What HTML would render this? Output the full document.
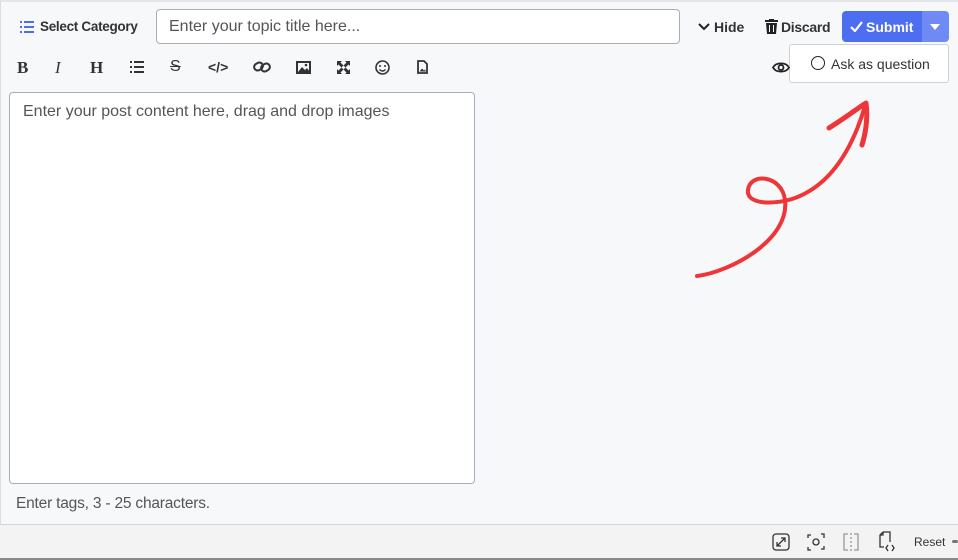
<!DOCTYPE html>
<html><head><meta charset="utf-8"><style>
*{box-sizing:border-box;margin:0;padding:0}
body{width:958px;height:560px;overflow:hidden;background:#f3f3f3;font-family:"Liberation Sans",sans-serif;position:relative}
.panel{position:absolute;left:0;top:0;width:958px;height:525px;background:#f7f8fa;border-left:1px solid #dcdde0;border-bottom:1px solid #d4d5d8;border-top:2px solid #e4e5e8}
.a{position:absolute}
.btxt{font-size:14px;font-weight:bold;color:#333}
</style></head><body>
<div class="panel"></div>
<svg class="a" style="left:20px;top:20px" width="14" height="14" viewBox="0 0 14 14" fill="#4a6cf7"><rect x="0" y="1" width="2" height="2"/><rect x="4" y="1" width="10" height="2"/><rect x="0" y="6" width="2" height="2"/><rect x="4" y="6" width="10" height="2"/><rect x="0" y="11" width="2" height="2"/><rect x="4" y="11" width="10" height="2"/></svg>
<div class="a btxt" style="left:40px;top:19px;color:#333;font-size:13.5px;letter-spacing:-0.3px">Select Category</div>
<div class="a" style="left:156px;top:9px;width:524px;height:35px;background:#fff;border:1px solid #a9adb4;border-radius:4px;font-size:16px;color:#555;padding:8px 12px">Enter your topic title here...</div>
<svg class="a" style="left:698px;top:22px" width="12" height="10" viewBox="0 0 12 10"><path d="M1 2l5 5 5-5" fill="none" stroke="#222" stroke-width="2"/></svg>
<div class="a btxt" style="left:714px;top:19px">Hide</div>
<svg class="a" style="left:765px;top:19px" width="13" height="15" viewBox="0 0 13 15" fill="#222"><rect x="0" y="1" width="13" height="2"/><rect x="4" y="0" width="5" height="2"/><path d="M1 4h11l-1 11H2z"/><rect x="4" y="6" width="1" height="7" fill="#fff"/><rect x="8" y="6" width="1" height="7" fill="#fff"/></svg>
<div class="a btxt" style="left:781px;top:19px;letter-spacing:-0.3px">Discard</div>
<div class="a" style="left:842px;top:11px;width:80px;height:31px;background:#4e6ef2;border-radius:4px 0 0 4px"></div>
<div class="a" style="left:922px;top:11px;width:27px;height:31px;background:#6f89f5;border-radius:0 4px 4px 0"></div>
<svg class="a" style="left:850px;top:21px" width="13" height="11" viewBox="0 0 13 11"><path d="M1 6l4 4 7-9" fill="none" stroke="#fff" stroke-width="2.2"/></svg>
<div class="a btxt" style="left:866px;top:19px;color:#fff">Submit</div>
<svg class="a" style="left:930px;top:24px" width="10" height="6" viewBox="0 0 10 6"><path d="M0 0h10L5 6z" fill="#fff"/></svg>
<div class="a" style="left:789px;top:44px;width:160px;height:39px;background:#fff;border:1px solid #cfd1d5;border-radius:3px"></div>
<div class="a" style="left:811px;top:56px;width:14px;height:14px;border:1.5px solid #222;border-radius:50%"></div>
<div class="a" style="left:831px;top:56px;font-size:14px;color:#333">Ask as question</div>
<svg class="a" style="left:772px;top:61px" width="18" height="13" viewBox="0 0 18 13"><path d="M1 6.5C4 1 14 1 17 6.5 14 12 4 12 1 6.5z" fill="none" stroke="#222" stroke-width="1.8"/><circle cx="9" cy="6.5" r="2.5" fill="none" stroke="#222" stroke-width="1.8"/></svg>
<div class="a" style="left:17px;top:58px;font:bold 17px 'Liberation Serif',serif;color:#333">B</div>
<div class="a" style="left:55px;top:58px;font:italic 17px 'Liberation Serif',serif;color:#333">I</div>
<div class="a" style="left:90px;top:58px;font:bold 17px 'Liberation Serif',serif;color:#333">H</div>
<svg class="a" style="left:130px;top:61px" width="14" height="13" viewBox="0 0 14 13" fill="#333"><rect x="0" y="0" width="2" height="2"/><rect x="4" y="0" width="10" height="2"/><rect x="0" y="5" width="2" height="2"/><rect x="4" y="5" width="10" height="2"/><rect x="0" y="10" width="2" height="2"/><rect x="4" y="10" width="10" height="2"/></svg>
<div class="a" style="left:170px;top:58px;font-size:16px;color:#333;text-decoration:line-through">S</div>
<div class="a" style="left:208px;top:59px;font-size:14px;font-weight:bold;color:#333">&lt;/&gt;</div>
<svg class="a" style="left:253px;top:60px" width="18" height="14" viewBox="0 0 18 14"><rect x="1" y="3" width="9" height="7" rx="3.5" transform="rotate(-30 5.5 6.5)" fill="none" stroke="#333" stroke-width="2"/><rect x="8" y="4" width="9" height="7" rx="3.5" transform="rotate(-30 12.5 7.5)" fill="none" stroke="#333" stroke-width="2"/></svg>
<svg class="a" style="left:296px;top:61px" width="15" height="13" viewBox="0 0 15 13"><rect x="1" y="1" width="13" height="11" fill="none" stroke="#333" stroke-width="2"/><path d="M2 11l4-5 3 3 2-2 3 4z" fill="#333"/><circle cx="10" cy="4" r="1.3" fill="#333"/></svg>
<svg class="a" style="left:337px;top:61px" width="13" height="13" viewBox="0 0 13 13" fill="#333"><path d="M0 0h5L3.5 1.5 6.5 4.5 4.5 6.5 1.5 3.5 0 5zM13 0v5l-1.5-1.5-3 3-2-2 3-3L8 0zM0 13V8l1.5 1.5 3-3 2 2-3 3L5 13zM13 13H8l1.5-1.5-3-3 2-2 3 3L13 8z"/></svg>
<svg class="a" style="left:375px;top:60px" width="15" height="15" viewBox="0 0 15 15"><circle cx="7.5" cy="7.5" r="6.5" fill="none" stroke="#333" stroke-width="1.6"/><circle cx="5" cy="6" r="1" fill="#333"/><circle cx="10" cy="6" r="1" fill="#333"/><path d="M4.5 9.5q3 3 6 0" fill="none" stroke="#333" stroke-width="1.4"/></svg>
<svg class="a" style="left:417px;top:60px" width="11" height="14" viewBox="0 0 11 14"><path d="M1 1h6l3 3v9H1z" fill="none" stroke="#333" stroke-width="1.8"/><path d="M2.5 11.5l2.5-3 2 2 1-1 1 2z" fill="#333"/></svg>
<div class="a" style="left:9px;top:92px;width:466px;height:392px;background:#fff;border:1px solid #a9adb4;border-radius:4px;font-size:16px;color:#555;padding:10px 13px">Enter your post content here, drag and drop images</div>
<div class="a" style="left:16px;top:495px;font-size:15.5px;color:#555;letter-spacing:-0.2px">Enter tags, 3 - 25 characters.</div>
<svg class="a" style="left:0;top:0" width="958" height="525" viewBox="0 0 958 525"><path d="M697 276C730 272 790 240 785 200C782 175 750 172 748 190C746 205 775 205 795 198C830 185 852 150 865 106" fill="none" stroke="#ef3538" stroke-width="4" stroke-linecap="round"/><path d="M829 128C845 118 858 108 866 103C868 118 866 132 862 145" fill="none" stroke="#ef3538" stroke-width="5" stroke-linecap="round" stroke-linejoin="round"/></svg>
<div class="a" style="left:0;top:558px;width:958px;height:2px;background:#8a8a8a"></div>
<svg class="a" style="left:772px;top:533px" width="18" height="18" viewBox="0 0 18 18"><rect x="1" y="1" width="16" height="16" rx="3" fill="none" stroke="#333" stroke-width="1.3"/><path d="M5 13L13 5M9 5h4v4M5 9v4h4" fill="none" stroke="#333" stroke-width="1.3"/></svg>
<svg class="a" style="left:807px;top:533px" width="18" height="18" viewBox="0 0 18 18" fill="none" stroke="#333" stroke-width="1.3"><path d="M1 5V2h3M14 1h3v4M17 13v3h-3M4 17H1v-3"/><circle cx="9" cy="9" r="3"/></svg>
<svg class="a" style="left:841px;top:532px" width="20" height="20" viewBox="0 0 20 20" fill="none" stroke="#999" stroke-width="1.3"><path d="M7 2H3v16h4M13 2h4v16h-4"/><path d="M10 1v18" stroke-dasharray="2 2"/></svg>
<svg class="a" style="left:878px;top:531px" width="18" height="22" viewBox="0 0 18 22" fill="none" stroke="#333" stroke-width="1.3"><path d="M5 1h7v10M5 1L2 4v12h4M5 1v3H2"/><path d="M10 14l-2 3 2 3M14 14l2 3-2 3"/></svg>
<div class="a" style="left:914px;top:535px;font-size:12px;color:#333">Reset</div>
<div class="a" style="left:952px;top:540px;width:6px;height:3px;background:#777;border-radius:2px"></div>
</body></html>
